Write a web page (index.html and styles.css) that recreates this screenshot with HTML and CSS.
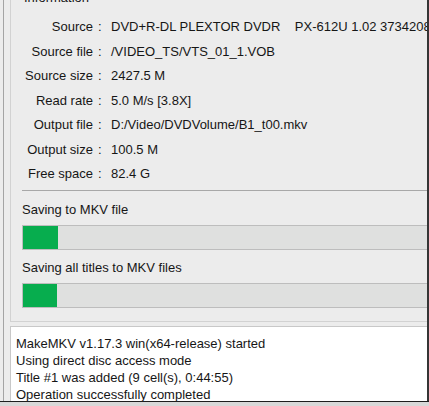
FILE: index.html
```html
<!DOCTYPE html>
<html>
<head>
<meta charset="utf-8">
<link rel="stylesheet" href="styles.css">
</head>
<body>
<div class="outer">
<div class="screen">
  <fieldset class="info">
    <legend class="info-title">Information</legend>
    <div class="rows">
      <div class="label">Source</div><div class="colon">:</div><div class="value">DVD+R-DL PLEXTOR DVDR&nbsp;&nbsp;&nbsp;&nbsp;PX-612U 1.02 3734208395</div>
      <div class="label">Source file</div><div class="colon">:</div><div class="value">/VIDEO_TS/VTS_01_1.VOB</div>
      <div class="label">Source size</div><div class="colon">:</div><div class="value">2427.5 M</div>
      <div class="label">Read rate</div><div class="colon">:</div><div class="value">5.0 M/s [3.8X]</div>
      <div class="label">Output file</div><div class="colon">:</div><div class="value">D:/Video/DVDVolume/B1_t00.mkv</div>
      <div class="label">Output size</div><div class="colon">:</div><div class="value">100.5 M</div>
      <div class="label">Free space</div><div class="colon">:</div><div class="value">82.4 G</div>
    </div>
    <div class="sep"></div>
    <div class="caption first">Saving to MKV file</div>
    <div class="bar"><div class="fill" style="width:35px"></div></div>
    <div class="caption">Saving all titles to MKV files</div>
    <div class="bar"><div class="fill" style="width:34px"></div></div>
  </fieldset>
  <div class="log">
    <div class="line">MakeMKV v1.17.3 win(x64-release) started</div>
    <div class="line">Using direct disc access mode</div>
    <div class="line">Title #1 was added (9 cell(s), 0:44:55)</div>
    <div class="line">Operation successfully completed</div>
  </div>
</div>
</div>
</body>
</html>
```

FILE: styles.css
```css
html, body {
  margin: 0;
  padding: 0;
}
body {
  width: 429px;
  height: 406px;
  overflow: hidden;
  background: #d8d8d8;
  font-family: "Liberation Sans", Arial, sans-serif;
  font-size: 13px;
  color: #161616;
}
.outer {
  height: 401px;
  border-bottom: 1px solid #1e1e1e;
  background: #ececec;
  padding-left: 3px;
}
.screen {
  box-sizing: border-box;
  width: 426px;
  height: 401px;
  border-left: 1px solid #a4a4a4;
  border-right: 2px solid #353535;
  background: #ececec;
  padding-left: 6px;
  display: flex;
  flex-direction: column;
  overflow: hidden;
}
.info {
  margin: -10px -30px 0 0;
  padding: 0 0 13px 11px;
  border: 1px solid #d2d2d2;
  border-right: none;
  min-width: 0;
}
.info-title {
  padding: 0 2px;
  line-height: 15px;
}
.rows {
  display: grid;
  grid-template-columns: 71px 18px 1fr;
  line-height: 24.5px;
  padding-top: 10px;
  white-space: nowrap;
}
.label {
  text-align: right;
}
.colon {
  padding-left: 5px;
}
.sep {
  margin-top: 3px;
  border-top: 1px solid #a8a8a8;
}
.caption {
  line-height: 15px;
  margin-top: 10px;
  margin-bottom: 8px;
}
.caption.first {
  margin-top: 11px;
}
.bar {
  height: 23px;
  border: 1px solid #bdbdbd;
  background: #dfe0df;
}
.fill {
  height: 100%;
  background: #07ad4e;
}
.log {
  margin-top: 4px;
  flex: 1;
  background: #ffffff;
  border-left: 1px solid #c8c8c8;
  border-top: 1px solid #c8c8c8;
  padding: 8px 0 0 5px;
  line-height: 17px;
  white-space: nowrap;
  overflow: hidden;
}
```
